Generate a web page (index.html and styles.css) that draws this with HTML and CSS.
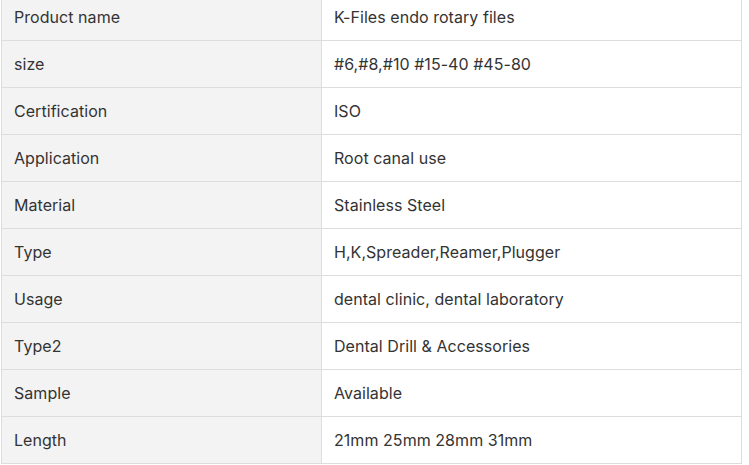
FILE: index.html
```html
<!DOCTYPE html>
<html>
<head>
<meta charset="utf-8">
<link rel="stylesheet" href="styles.css">
</head>
<body>
<table class="spec">
<tr><td class="k">Product name</td><td class="v">K-Files endo rotary files</td></tr>
<tr><td class="k">size</td><td class="v">#6,#8,#10 #15-40 #45-80</td></tr>
<tr><td class="k">Certification</td><td class="v">ISO</td></tr>
<tr><td class="k">Application</td><td class="v">Root canal use</td></tr>
<tr><td class="k">Material</td><td class="v">Stainless Steel</td></tr>
<tr><td class="k">Type</td><td class="v">H,K,Spreader,Reamer,Plugger</td></tr>
<tr><td class="k">Usage</td><td class="v">dental clinic, dental laboratory</td></tr>
<tr><td class="k">Type2</td><td class="v">Dental Drill &amp; Accessories</td></tr>
<tr><td class="k">Sample</td><td class="v">Available</td></tr>
<tr><td class="k">Length</td><td class="v">21mm 25mm 28mm 31mm</td></tr>
</table>
</body>
</html>
```
FILE: styles.css
```css
html, body {
  margin: 0;
  padding: 0;
  background: #ffffff;
}
body {
  padding-left: 1px;
  font-family: Inter, "Liberation Sans", sans-serif;
  font-size: 16px;
  color: #333333;
}
.spec {
  border-collapse: collapse;
  width: 741px;
  margin-top: -7px;
}
.spec td {
  border: 1px solid #dddddd;
  height: 47px;
  padding: 0 12px;
  box-sizing: border-box;
  vertical-align: middle;
  line-height: 20px;
  letter-spacing: 0.05px;
}
.spec .k {
  width: 320px;
  background: #f3f3f3;
}
.spec .v {
  background: #ffffff;
}
```
